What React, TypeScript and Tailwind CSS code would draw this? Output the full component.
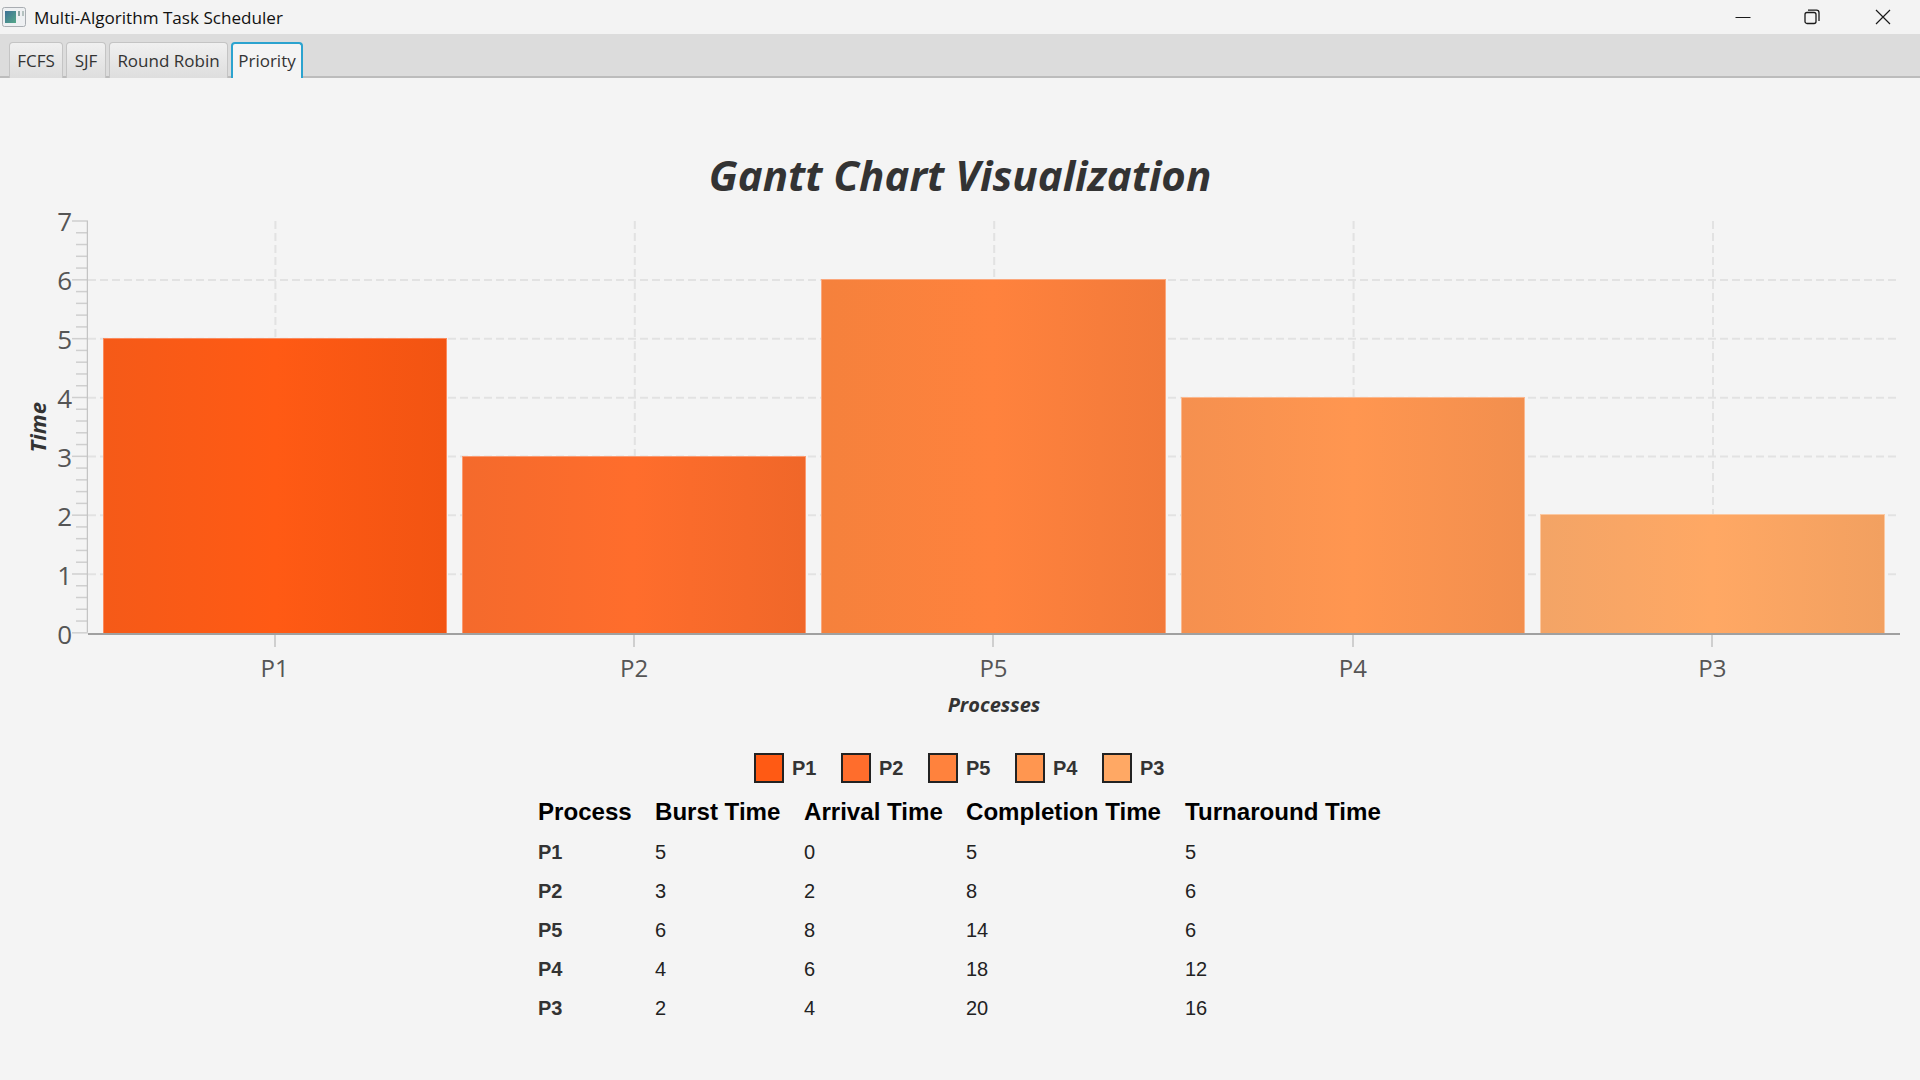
const UNIT = 58.83;

const tabs = [
	{ label: "FCFS", width: "w-[54px]" },
	{ label: "SJF", width: "w-[40px]" },
	{ label: "Round Robin", width: "w-[119px]" },
];

const bars = [
	{ id: "P1", value: 5, fill: "from-[#f55a18] via-[#ff5a14] to-[#f25412]", top: "border-[#fb8a5c]", swatch: "bg-[#ff5a14]" },
	{ id: "P2", value: 3, fill: "from-[#f46a2c] via-[#ff6d2c] to-[#f06729]", top: "border-[#fb9a70]", swatch: "bg-[#ff6d2c]" },
	{ id: "P5", value: 6, fill: "from-[#f5813c] via-[#ff823d] to-[#f27a3a]", top: "border-[#fba77c]", swatch: "bg-[#ff823d]" },
	{ id: "P4", value: 4, fill: "from-[#f5904f] via-[#ff9650] to-[#f28f4e]", top: "border-[#fbb88e]", swatch: "bg-[#ff9650]" },
	{ id: "P3", value: 2, fill: "from-[#f3a466] via-[#ffa864] to-[#f2a060]", top: "border-[#fcc8a0]", swatch: "bg-[#ffa864]" },
];

const headers = ["Process", "Burst Time", "Arrival Time", "Completion Time", "Turnaround Time"];

const rows = [
	["P1", "5", "0", "5", "5"],
	["P2", "3", "2", "8", "6"],
	["P5", "6", "8", "14", "6"],
	["P4", "4", "6", "18", "12"],
	["P3", "2", "4", "20", "16"],
];

function WindowIcon() {
	return (
		<svg width="24" height="20" viewBox="0 0 24 20" className="shrink-0">
			<defs>
				<linearGradient id="win" x1="0" y1="0" x2="1" y2="1">
					<stop offset="0" stopColor="#3c6f96" />
					<stop offset="1" stopColor="#55a888" />
				</linearGradient>
			</defs>
			<rect x="0.5" y="0.5" width="23" height="19" rx="2" fill="#eef0f2" stroke="#a9adb2" />
			<rect x="3" y="4" width="11" height="12" fill="url(#win)" />
			<rect x="16" y="4" width="2" height="5" fill="#8aa3a0" />
			<rect x="20" y="4" width="2" height="5" fill="#b5c2c0" />
		</svg>
	);
}

function TitleBar() {
	return (
		<div className="h-[34px] flex items-center pl-[2px] bg-[#f3f3f3]">
			<WindowIcon />
			<span className="ml-[8px] pt-[1px] text-[17.1px] text-[#111] font-['Open_Sans',sans-serif]">
				Multi-Algorithm Task Scheduler
			</span>
			<div className="ml-auto flex items-center text-[#1a1a1a]">
				<svg width="16" height="16" viewBox="0 0 16 16" className="mr-[53px]">
					<path d="M0.5 8.5h15" stroke="currentColor" strokeWidth="1" fill="none" />
				</svg>
				<svg width="16" height="16" viewBox="0 0 16 16" className="mr-[55px]">
					<rect x="1" y="3.5" width="11" height="11" rx="2" stroke="currentColor" strokeWidth="1.3" fill="none" />
					<path d="M4 1.2h8.5a2.5 2.5 0 0 1 2.5 2.5V12" stroke="currentColor" strokeWidth="1.3" fill="none" />
				</svg>
				<svg width="16" height="16" viewBox="0 0 16 16" className="mr-[29px]">
					<path d="M1 1l14 14M15 1L1 15" stroke="currentColor" strokeWidth="1.2" fill="none" />
				</svg>
			</div>
		</div>
	);
}

function TabBar() {
	return (
		<div className="h-[44px] flex items-end gap-[3px] pl-[9px] bg-[#dcdcdc] border-b-2 border-[#bcbcbc] font-['Open_Sans',sans-serif] text-[17px] text-[#333]">
			{tabs.map((tab) => (
				<div
					key={tab.label}
					className={`${tab.width} h-[36px] -mb-[2px] pt-[1px] flex items-center justify-center rounded-t-[4px] border border-b-0 border-[#c4c4c4] bg-linear-to-b from-[#f0f0f0] to-[#dedede]`}
				>
					{tab.label}
				</div>
			))}
			<div className="w-[72px] h-[36px] -mb-[2px] flex items-center justify-center rounded-t-[4px] border-2 border-b-0 border-[#2ba3cf] bg-[#f4f4f4]">
				Priority
			</div>
		</div>
	);
}

function YAxis() {
	const marks = [];
	for (let i = 0; i <= 35; i++) {
		const y = 1 + (i * UNIT) / 5;
		marks.push(
			<path
				key={i}
				d={`M${i % 5 === 0 ? 0 : 4} ${y}H16`}
				stroke="#cfcfcf"
				strokeWidth="1.5"
				fill="none"
			/>,
		);
	}
	return (
		<svg width="16" height="414" viewBox="0 0 16 414" className="shrink-0 -my-px">
			{marks}
			<path d="M15.5 1V412" stroke="#c4c4c4" strokeWidth="1.5" fill="none" />
		</svg>
	);
}

function PlotGrid() {
	const centers = [187.4, 546.8, 906.2, 1265.6, 1625];
	return (
		<svg
			width="1812"
			height="412"
			viewBox="0 0 1812 412"
			className="absolute inset-0"
		>
			{[1, 2, 3, 4, 5, 6].map((n) => (
				<path
					key={n}
					d={`M0 ${412 - n * UNIT}H1812`}
					stroke="#e2e2e2"
					strokeWidth="2"
					strokeDasharray="8 4"
					fill="none"
				/>
			))}
			{centers.map((x) => (
				<path
					key={x}
					d={`M${x} 0V412`}
					stroke="#e2e2e2"
					strokeWidth="2"
					strokeDasharray="8 4"
					fill="none"
				/>
			))}
		</svg>
	);
}

function Chart() {
	return (
		<div className="font-['Open_Sans',sans-serif]">
			<h1 className="pt-[65px] h-[143px] text-center text-[42px] leading-[64px] font-bold italic text-[#333]">
				Gantt Chart Visualization
			</h1>
			<div className="flex h-[412px]">
				<div className="w-[48px] flex items-center justify-end">
					<span className="[writing-mode:vertical-rl] rotate-180 text-[22px] leading-[22px] font-bold italic text-[#333]">
						Time
					</span>
				</div>
				<div className="w-[24px] -mb-[2px] flex flex-col justify-between text-[26px] text-[#555] text-right">
					{[7, 6, 5, 4, 3, 2, 1, 0].map((n) => (
						<div key={n} className="h-0 flex items-center justify-end">
							{n}
						</div>
					))}
				</div>
				<YAxis />
				<div className="relative w-[1812px] h-[414px] shrink-0 border-b-2 border-[#a0a0a0]">
					<PlotGrid />
					<div className="relative h-full flex items-end gap-[15px] pl-[14.5px] pr-[15.5px]">
						{bars.map((bar) => (
							<div
								key={bar.id}
								className={`flex-1 bg-linear-to-r border border-b-0 ${bar.fill} ${bar.top}`}
								style={{ height: bar.value * UNIT + 1 }}
							/>
						))}
					</div>
				</div>
			</div>
			<div className="ml-[88px] w-[1812px] pl-[7px] pr-[8px] grid grid-cols-5 text-center text-[24px] text-[#555]">
				{bars.map((bar) => (
					<div key={bar.id} className="flex flex-col items-center">
						<div className="w-[2px] h-[14px] bg-[#cfcfcf]" />
						<span className="mt-[1px] leading-[40px]">{bar.id}</span>
					</div>
				))}
			</div>
			<div className="ml-[88px] mt-[3px] w-[1812px] text-center text-[20px] leading-[28px] font-bold italic text-[#333]">
				Processes
			</div>
		</div>
	);
}

function Legend() {
	return (
		<div className="mt-[34px] ml-[754px] flex gap-[24px] font-['Liberation_Sans',sans-serif] text-[20px] font-bold text-[#333]">
			{bars.map((bar) => (
				<div key={bar.id} className="w-[63px] flex items-center gap-[8px]">
					<div className={`w-[30px] h-[30px] border-2 border-[#222] ${bar.swatch}`} />
					{bar.id}
				</div>
			))}
		</div>
	);
}

function ResultsTable() {
	return (
		<div className="mt-[9px] ml-[538px] w-[880px] grid grid-cols-[117px_149px_162px_219px_1fr] font-['Liberation_Sans',sans-serif] text-[#222]">
			{headers.map((h) => (
				<div key={h} className="h-[40px] flex items-center text-[24.1px] font-bold text-black whitespace-nowrap">
					{h}
				</div>
			))}
			{rows.map((row) =>
				row.map((cell, i) => (
					<div
						key={`${row[0]}-${i}`}
						className={`h-[39px] flex items-center text-[20px] ${i === 0 ? "font-bold text-[#333]" : ""}`}
					>
						{cell}
					</div>
				)),
			)}
		</div>
	);
}

export default function App() {
	return (
		<div className="w-[1920px] h-[1080px] overflow-hidden flex flex-col bg-[#f4f4f4]">
			<TitleBar />
			<TabBar />
			<Chart />
			<Legend />
			<ResultsTable />
		</div>
	);
}
